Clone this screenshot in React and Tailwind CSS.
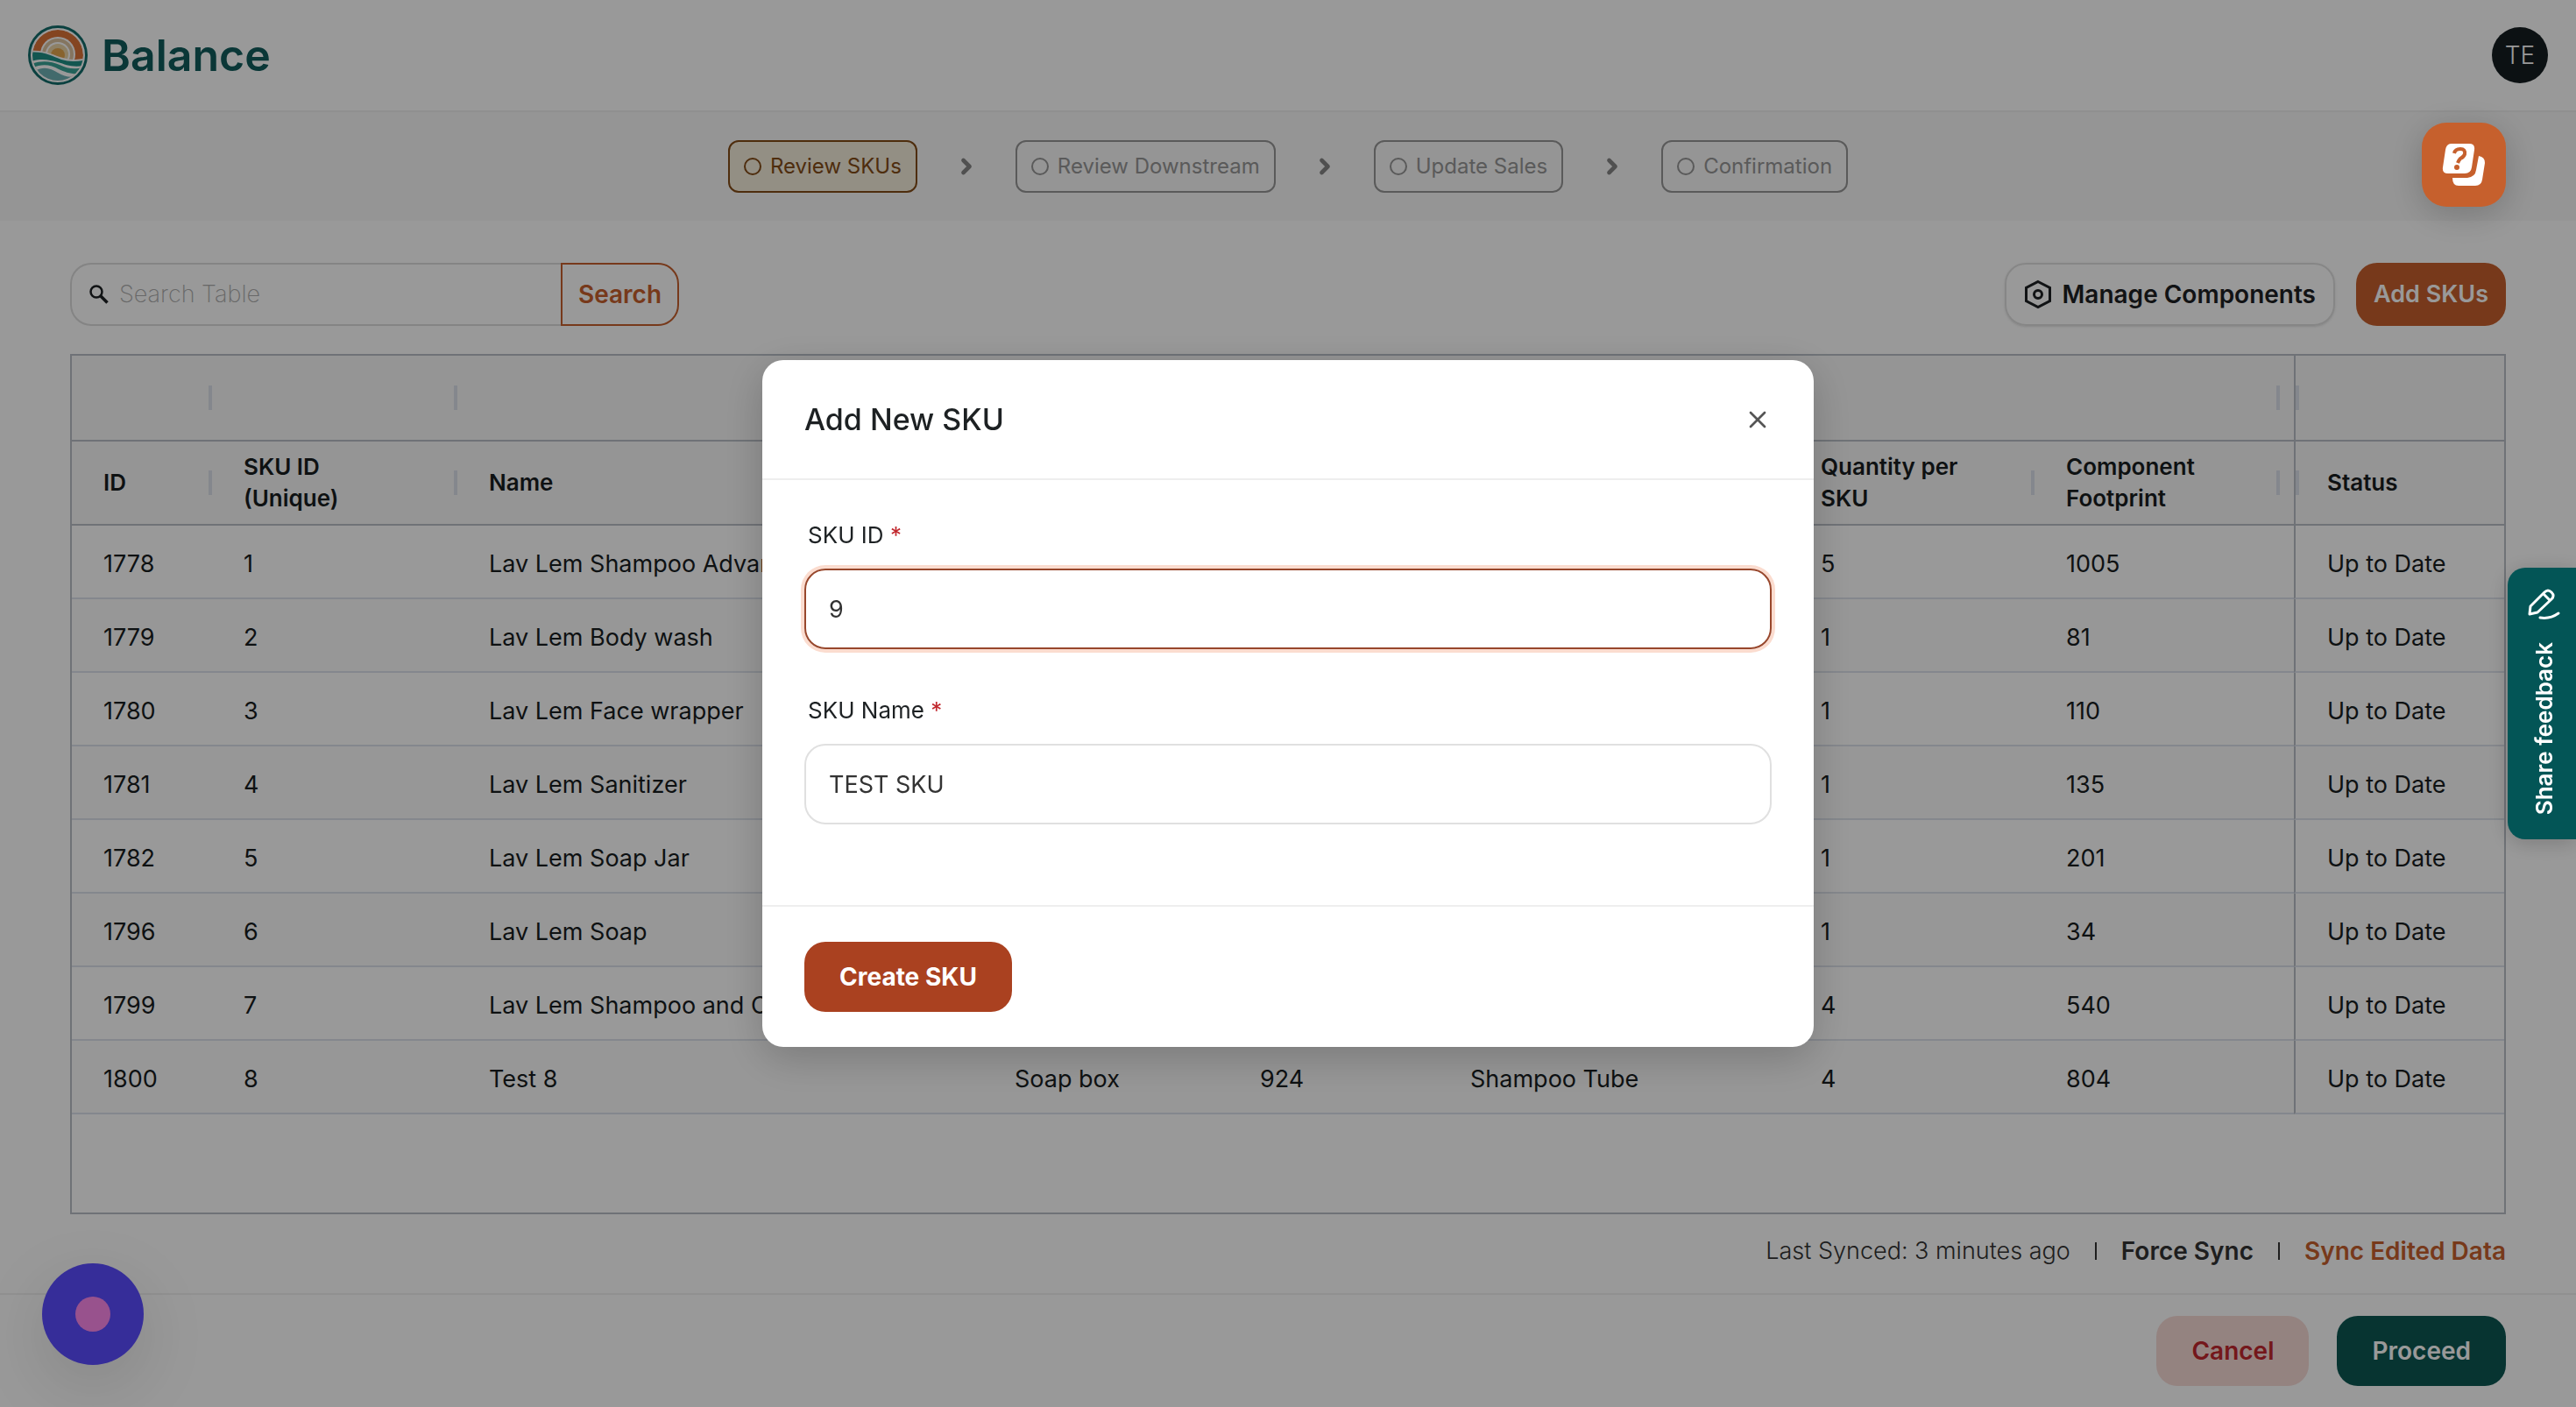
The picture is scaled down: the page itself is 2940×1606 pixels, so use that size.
import React, { useState } from 'react';
import { ChevronRight, X } from 'lucide-react';

const STEPS = [
  { label: 'Review SKUs', active: true },
  { label: 'Review Downstream' },
  { label: 'Update Sales' },
  { label: 'Confirmation' },
];

const ROWS = [
  { id: 1778, sku: 1, name: 'Lav Lem Shampoo Advanced', qty: 5, footprint: 1005 },
  { id: 1779, sku: 2, name: 'Lav Lem Body wash', qty: 1, footprint: 81 },
  { id: 1780, sku: 3, name: 'Lav Lem Face wrapper', qty: 1, footprint: 110 },
  { id: 1781, sku: 4, name: 'Lav Lem Sanitizer', qty: 1, footprint: 135 },
  { id: 1782, sku: 5, name: 'Lav Lem Soap Jar', qty: 1, footprint: 201 },
  { id: 1796, sku: 6, name: 'Lav Lem Soap', qty: 1, footprint: 34 },
  { id: 1799, sku: 7, name: 'Lav Lem Shampoo and Conditioner', qty: 4, footprint: 540 },
  { id: 1800, sku: 8, name: 'Test 8', component: 'Soap box', componentId: 924, componentName: 'Shampoo Tube', qty: 4, footprint: 804 },
];

const Logo = () => (
  <svg width="68" height="68" viewBox="0 0 68 68" aria-hidden="true">
    <defs>
      <clipPath id="logo-disc">
        <circle cx="34" cy="34" r="29" />
      </clipPath>
    </defs>
    <circle cx="34" cy="34" r="32.5" fill="#fff" stroke="#136d6b" strokeWidth="3" />
    <g clipPath="url(#logo-disc)">
      <circle cx="34" cy="34" r="29" fill="#dd7438" />
      <circle cx="34" cy="33" r="20" fill="#fff" />
      <circle cx="34" cy="33" r="18" fill="#dcc3a0" />
      <circle cx="34" cy="33" r="14" fill="#fff" />
      <circle cx="34" cy="33" r="12" fill="#ecd5a8" />
      <circle cx="34" cy="34" r="8" fill="#e3a54d" />
      <path d="M0 29C20 27 28 34 40 37C50 40 60 39 68 37V68H0Z" fill="#fff" />
      <path d="M0 31C18 29 27 35 38 39C48 42 58 41 68 39V45C52 49 44 45 34 42C24 39 14 37 0 42Z" fill="#1f8f86" />
      <path d="M0 46C14 39 26 41 36 45C46 50 56 51 68 46V53C54 58 44 54 35 50C26 45 16 43 4 49Z" fill="#3aa497" />
      <path d="M8 52C18 46 26 49 34 54C42 59 50 60 60 57L50 68H20Z" fill="#6fb1b5" />
    </g>
  </svg>
);

const SearchIcon = () => (
  <svg width="22" height="22" viewBox="0 0 22 22" fill="none" stroke="#1d2123" className="shrink-0" aria-hidden="true">
    <circle cx="8" cy="8" r="6.5" strokeWidth="2.5" />
    <path d="M12.5 12.5L20.5 20.5" strokeWidth="3.5" />
  </svg>
);

const ComponentsIcon = () => (
  <svg width="32" height="34" viewBox="0 0 32 34" fill="none" stroke="#1d2123" strokeWidth="3" aria-hidden="true">
    <path d="M16 2.5L29.5 9.5V24.5L16 31.5L2.5 24.5V9.5Z" />
    <circle cx="16" cy="17" r="4.5" />
  </svg>
);

const HelpCardsIcon = () => (
  <svg width="50" height="50" viewBox="0 0 50 50" aria-hidden="true">
    <path d="M11 1H31Q38 1 37 8L34 28Q33 35 26 35H7Q0 35 1 28L4 8Q5 1 11 1Z" fill="#fff" />
    <path d="M42 15Q49 16 49 23L46 42Q45 49 38 49H19Q12 49 12 40H29Q38 39 39 31Z" fill="#fff" />
    <path d="M14 12Q15 7 21 7Q27 7 26 13Q25 16 21 18Q19 20 18 23" fill="none" stroke="#c6602d" strokeWidth="4" />
    <circle cx="17" cy="28" r="3" fill="#c6602d" />
  </svg>
);

const PencilIcon = () => (
  <svg width="38" height="36" viewBox="0 0 38 36" fill="none" stroke="#fff" strokeWidth="3" strokeLinecap="round" strokeLinejoin="round" aria-hidden="true">
    <path d="M3 29L4 20L20 4Q24 0 28 4Q32 8 28 12L12 27Z" />
    <path d="M19 6L26 13" />
    <path d="M15 33Q26 35 36 28" />
  </svg>
);

// 欄位右側的拖曳把手
const ResizeHandle = () => (
  <span className="absolute right-0 top-1/2 h-7 w-1 -translate-y-1/2 bg-[#dde2eb]" />
);

const HeaderCell = ({ children, colSpan, handle = true }) => (
  <th colSpan={colSpan} className="relative px-9 text-left font-semibold leading-9">
    {children}
    {handle && <ResizeHandle />}
  </th>
);

const PinnedHeaderCell = ({ children }) => (
  <th className="relative border-l-2 border-[#babfc7] px-9 text-left font-semibold leading-9">
    <span className="absolute left-0 top-1/2 h-7 w-1 -translate-y-1/2 bg-[#dde2eb]" />
    {children}
  </th>
);

const SkuTable = () => (
  <div className="flex-1 border-2 border-[#babfc7] bg-white">
    <table className="w-full table-fixed border-separate border-spacing-0 text-[27px] text-[#181d1f]">
      <colgroup>
        <col className="w-[160px]" />
        <col className="w-[280px]" />
        <col className="w-[600px]" />
        <col className="w-[280px]" />
        <col className="w-[240px]" />
        <col className="w-[400px]" />
        <col className="w-[280px]" />
        <col className="w-[280px]" />
        <col />
        <col className="w-[240px]" />
      </colgroup>
      <thead className="bg-[#f8f8f8] text-[26px]">
        <tr className="h-[98px] [&>th]:border-b-2 [&>th]:border-[#babfc7]">
          <HeaderCell />
          <HeaderCell />
          <HeaderCell colSpan={6} />
          <HeaderCell handle={false} />
          <PinnedHeaderCell />
        </tr>
        <tr className="h-24 [&>th]:border-b-2 [&>th]:border-[#babfc7]">
          <HeaderCell>ID</HeaderCell>
          <HeaderCell>SKU ID<br />(Unique)</HeaderCell>
          <HeaderCell>Name</HeaderCell>
          <HeaderCell>Component</HeaderCell>
          <HeaderCell>ID</HeaderCell>
          <HeaderCell>Component Name</HeaderCell>
          <HeaderCell>Quantity per SKU</HeaderCell>
          <HeaderCell>Component Footprint</HeaderCell>
          <HeaderCell handle={false} />
          <PinnedHeaderCell>Status</PinnedHeaderCell>
        </tr>
      </thead>
      <tbody>
        {ROWS.map((row) => (
          <tr key={row.id} className="h-[84px] even:bg-[#fcfcfc] [&>td]:truncate [&>td]:border-b-2 [&>td]:border-b-[#dde2eb] [&>td]:pl-9 [&>td]:pt-1.5">
            <td>{row.id}</td>
            <td>{row.sku}</td>
            <td>{row.name}</td>
            <td>{row.component}</td>
            <td>{row.componentId}</td>
            <td>{row.componentName}</td>
            <td>{row.qty}</td>
            <td>{row.footprint}</td>
            <td />
            <td className="border-l-2 border-l-[#babfc7]">Up to Date</td>
          </tr>
        ))}
      </tbody>
    </table>
  </div>
);

const Field = ({ id, label, value, onChange, focused }) => (
  <div>
    <label htmlFor={id} className="block px-1 text-[26px] leading-9 text-[#1d2123]">
      {label} <span className="text-[#c1272d]">*</span>
    </label>
    <input
      id={id}
      type="text"
      value={value}
      onChange={(e) => onChange(e.target.value)}
      className={
        focused
          ? 'mt-5 block h-[92px] w-full rounded-3xl border-2 border-[#98472c] px-[26px] text-[27px] text-[#333] outline-none ring-4 ring-[#fbdccf]'
          : 'mt-5 block h-[92px] w-full rounded-3xl border-2 border-[#e0e0e0] px-[26px] text-[27px] text-[#333] outline-none'
      }
    />
  </div>
);

const AddSkuModal = () => {
  const [skuId, setSkuId] = useState('9');
  const [skuName, setSkuName] = useState('TEST SKU');

  return (
    <div className="fixed inset-0 z-20 flex items-center justify-center bg-black/40">
      <div role="dialog" aria-labelledby="modal-title" className="w-[1200px] rounded-3xl bg-white shadow-[0_12px_48px_rgba(0,0,0,0.2)]">
        <div className="flex h-[137px] items-center justify-between border-b-2 border-[#eeeeee] px-12">
          <h2 id="modal-title" className="text-[34px] font-medium text-[#1d2123]">Add New SKU</h2>
          <button aria-label="Close" className="text-[#555]">
            <X size={32} strokeWidth={2} />
          </button>
        </div>

        <div className="flex flex-col gap-[52px] px-12 pb-[92px] pt-[45px]">
          <Field id="sku-id" label="SKU ID" value={skuId} onChange={setSkuId} focused />
          <Field id="sku-name" label="SKU Name" value={skuName} onChange={setSkuName} />
        </div>

        <div className="border-t-2 border-[#eeeeee] px-12 py-10">
          <button className="h-20 rounded-3xl bg-[#aa4120] px-10 text-[28px] font-bold text-white">Create SKU</button>
        </div>
      </div>
    </div>
  );
};

const App = () => {
  return (
    <div className="flex min-h-screen flex-col bg-white font-['Inter','Liberation_Sans',sans-serif]">
      {/* 頁首 */}
      <header className="flex h-32 items-center justify-between border-b-2 border-[#f0f0f0] px-8">
        <div className="flex items-center gap-4">
          <Logo />
          <span className="text-[50px] font-semibold leading-none text-[#115c5c]">Balance</span>
        </div>
        <button className="size-16 rounded-full bg-[#141d20] text-[28px] font-light text-white">TE</button>
      </header>

      {/* 步驟列 */}
      <nav className="flex h-[124px] items-center justify-center bg-[#f8f8f8]">
        {STEPS.map((step, i) => (
          <React.Fragment key={step.label}>
            {i > 0 && <ChevronRight size={28} strokeWidth={4} className="mx-[42px] text-[#858585]" />}
            <div
              className={
                step.active
                  ? 'flex h-[60px] items-center gap-2.5 rounded-xl border-2 border-[#824b17] bg-[#f6eedc] px-4 text-2xl text-[#824b17]'
                  : 'flex h-[60px] items-center gap-2.5 rounded-xl border-2 border-[#969696] px-4 text-2xl text-[#969696]'
              }
            >
              <span className="size-5 rounded-full border-2 border-current" />
              {step.label}
            </div>
          </React.Fragment>
        ))}
      </nav>

      <main className="flex flex-1 flex-col px-20 pt-12">
        {/* 工具列 */}
        <div className="mb-8 flex items-center justify-between">
          <form className="flex h-[72px]" onSubmit={(e) => e.preventDefault()}>
            <label className="flex w-[560px] items-center gap-3 rounded-l-3xl border-2 border-r-0 border-[#dcdcdc] pl-5">
              <SearchIcon />
              <input
                type="search"
                aria-label="Search Table"
                placeholder="Search Table"
                className="w-full text-[27px] font-extralight outline-none placeholder:text-[#adadad]"
              />
            </label>
            <button className="rounded-r-3xl border-2 border-[#c6602d] px-[18px] text-[28px] font-semibold text-[#c6602d]">Search</button>
          </form>

          <div className="flex gap-6">
            <button className="flex h-[72px] items-center gap-3 rounded-3xl border-2 border-[#e0e0e0] px-5 text-[28px] font-semibold text-[#1d2123] shadow-sm">
              <ComponentsIcon />
              Manage Components
            </button>
            <button className="h-[72px] rounded-3xl bg-[#c6602d] px-5 text-[27px] font-semibold text-white">Add SKUs</button>
          </div>
        </div>

        <SkuTable />

        {/* 同步狀態 */}
        <div className="flex h-[90px] items-center justify-end gap-7 pb-1.5 text-[28px] text-[#333]">
          <span className="text-[27px] font-light">Last Synced: 3 minutes ago</span>
          <span className="h-5 w-0.5 bg-[#333]" />
          <button className="font-semibold">Force Sync</button>
          <span className="h-5 w-0.5 bg-[#333]" />
          <button className="font-semibold text-[#c6602d]">Sync Edited Data</button>
        </div>
      </main>

      <footer className="flex h-[130px] items-center justify-end gap-8 border-t-2 border-[#f0f0f0] px-20">
        <button className="h-20 rounded-3xl bg-[#f7dad6] px-10 text-[28px] font-semibold text-[#c1272d]">Cancel</button>
        <button className="h-20 rounded-3xl bg-[#0d5753] px-10 text-[28px] font-semibold text-white">Proceed</button>
      </footer>

      {/* 左下角浮動按鈕 */}
      <button
        aria-label="Record"
        className="fixed bottom-12 left-12 z-10 flex size-[116px] items-center justify-center rounded-full bg-[#5a4bff] shadow-[0_24px_80px_rgba(0,0,0,0.12)]"
      >
        <span className="size-10 rounded-full bg-[#fd89eb]" />
      </button>

      <AddSkuModal />

      {/* 說明與意見回饋 */}
      <button
        aria-label="Help"
        className="fixed right-20 top-[140px] z-30 flex size-24 items-center justify-center rounded-[28px] bg-[#c6602d] shadow-[0_8px_40px_rgba(0,0,0,0.2)]"
      >
        <HelpCardsIcon />
      </button>
      <button className="fixed right-0 top-[648px] z-30 flex h-[310px] w-[78px] flex-col items-center justify-between rounded-l-[20px] bg-[#035556] pb-7 pl-1 pt-6 shadow-[0_4px_24px_rgba(0,0,0,0.2)]">
        <PencilIcon />
        <span className="rotate-180 text-[26px] font-semibold text-white [writing-mode:vertical-rl]">Share feedback</span>
      </button>
    </div>
  );
};

export default App;
